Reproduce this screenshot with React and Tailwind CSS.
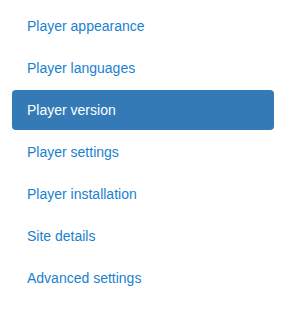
import React from 'react';

const items = [
    'Player appearance',
    'Player languages',
    'Player version',
    'Player settings',
    'Player installation',
    'Site details',
    'Advanced settings'
];

export default function App() {
    const active = 'Player version';
    return (
        <div className="w-[294px] h-[329px] bg-white pt-[6px] pl-[12px] pr-[20px]" style={{ fontFamily: '"Liberation Sans", Arial, sans-serif' }}>
            <ul className="flex flex-col gap-[2px]">
                {items.map((item) => (
                    <li key={item}>
                        {item === active ? (
                            <a className="block px-[15px] py-[10px] leading-[20px] text-[14px] rounded-[4px] bg-[#337ab7] text-white">
                                {item}
                            </a>
                        ) : (
                            <a className="block px-[15px] py-[10px] leading-[20px] text-[14px] rounded-[4px] text-[#1a7fcf]">
                                {item}
                            </a>
                        )}
                    </li>
                ))}
            </ul>
        </div>
    );
}
